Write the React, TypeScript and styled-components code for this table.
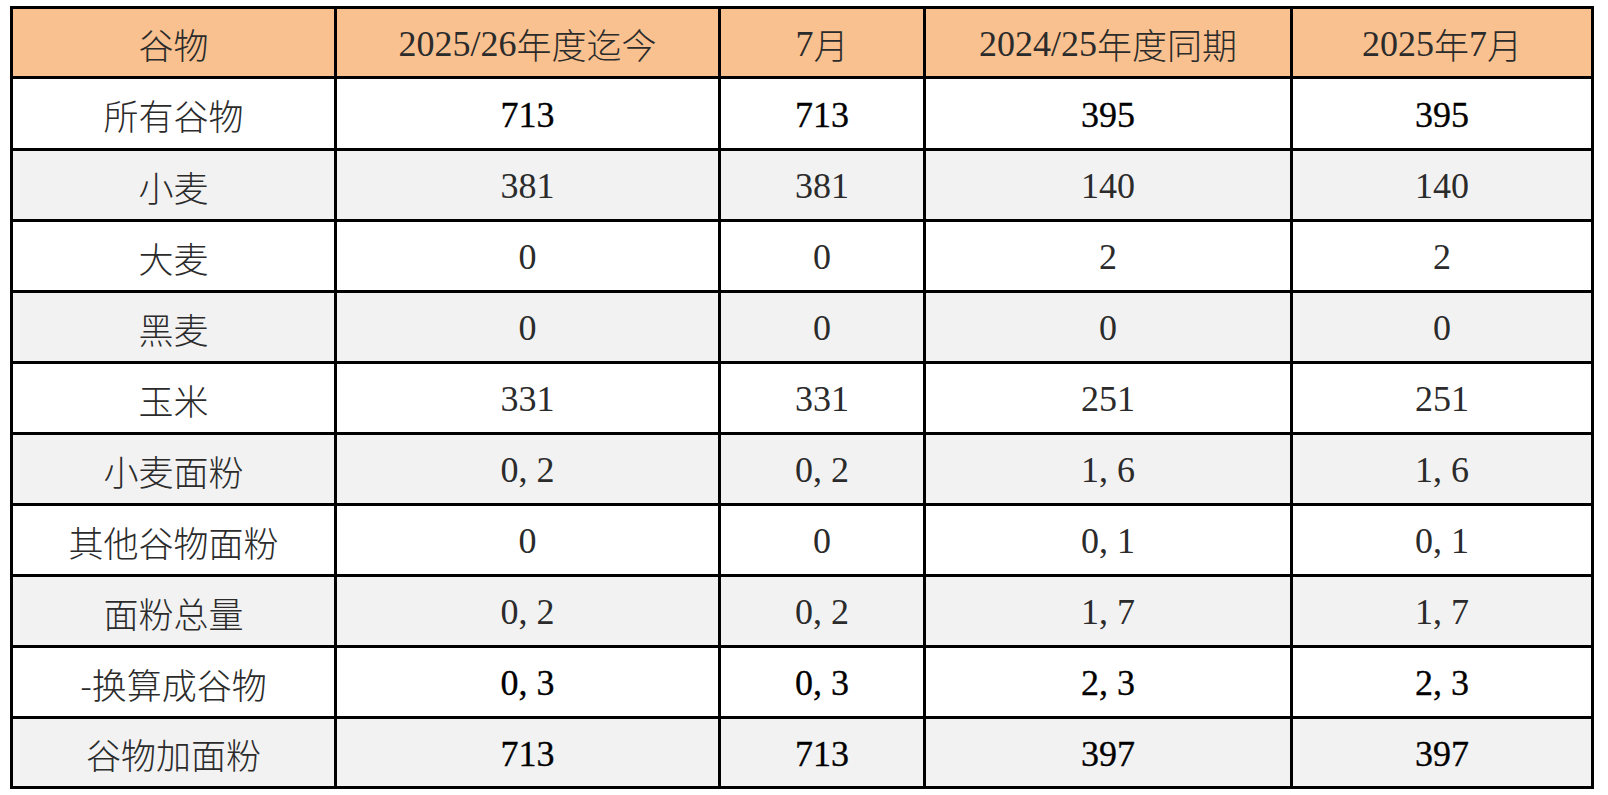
import { Fragment } from "react";
import styled, { createGlobalStyle } from "styled-components";

const GlobalStyle = createGlobalStyle`
    body {
        margin: 0;
        background: #ffffff;
    }
`;

const Page = styled.div`
    padding: 6px 10px 0;
`;

const Grid = styled.div`
    display: grid;
    grid-template-columns: 324px 384px 205px 367px 301px;
    grid-template-rows: 70px 72px repeat(8, 71px) 70px;
    width: max-content;
    border-top: 3px solid #000;
    border-left: 3px solid #000;
`;

const Cell = styled.div<{ $head?: boolean; $striped?: boolean; $strong?: boolean }>`
    box-sizing: border-box;
    display: flex;
    align-items: center;
    justify-content: center;
    padding-top: 2px;
    border-right: 3px solid #000;
    border-bottom: 3px solid #000;
    background: ${(p) => (p.$head ? "#f9c18f" : p.$striped ? "#f2f2f2" : "#ffffff")};
    color: ${(p) => (p.$strong ? "#000" : "#2b2b2b")};
    font-family: "Liberation Serif", "Tinos", "Times New Roman", serif;
    font-weight: 400;
    font-size: 36px;
    white-space: pre;
    -webkit-text-stroke: ${(p) => (p.$strong ? "0.3px #000" : "0")};
`;

const Label = styled.span<{ $head?: boolean }>`
    font-family: "Noto Sans CJK SC", sans-serif;
    font-size: ${(p) => (p.$head ? "35px" : "35px")};
    font-weight: 300;
    color: #2b2b2b;
    -webkit-text-stroke: 0;
`;

const Num = styled.span`
    font-family: "Liberation Serif", "Tinos", "Times New Roman", serif;
    font-weight: 400;
    font-size: 36px;
    color: #2b2b2b;
`;

const headers = ["谷物", "2025/26年度迄今", "7月", "2024/25年度同期", "2025年7月"];

const rows: { name: string; values: string[]; strong?: boolean }[] = [
    { name: "所有谷物", values: ["713", "713", "395", "395"], strong: true },
    { name: "小麦", values: ["381", "381", "140", "140"] },
    { name: "大麦", values: ["0", "0", "2", "2"] },
    { name: "黑麦", values: ["0", "0", "0", "0"] },
    { name: "玉米", values: ["331", "331", "251", "251"] },
    { name: "小麦面粉", values: ["0, 2", "0, 2", "1, 6", "1, 6"] },
    { name: "其他谷物面粉", values: ["0", "0", "0, 1", "0, 1"] },
    { name: "面粉总量", values: ["0, 2", "0, 2", "1, 7", "1, 7"] },
    { name: "-换算成谷物", values: ["0, 3", "0, 3", "2, 3", "2, 3"], strong: true },
    { name: "谷物加面粉", values: ["713", "713", "397", "397"], strong: true },
];

// digits keep the serif face, han characters use the CJK face
function HeaderText({ text }: { text: string }) {
    return (
        <>
            {text.split(/([0-9/]+)/).filter(Boolean).map((part, i) =>
                /[0-9]/.test(part) ? (
                    <Num key={i}>{part}</Num>
                ) : (
                    <Label key={i} $head>
                        {part}
                    </Label>
                )
            )}
        </>
    );
}

export default function App() {
    return (
        <Page>
            <GlobalStyle />
            <Grid>
                {headers.map((h) => (
                    <Cell key={h} $head>
                        <HeaderText text={h} />
                    </Cell>
                ))}
                {rows.map((row, i) => (
                    <Fragment key={row.name}>
                        <Cell $striped={i % 2 === 1}>
                            <Label>{row.name}</Label>
                        </Cell>
                        {row.values.map((v, j) => (
                            <Cell key={j} $striped={i % 2 === 1} $strong={row.strong}>
                                {v}
                            </Cell>
                        ))}
                    </Fragment>
                ))}
            </Grid>
        </Page>
    );
}
